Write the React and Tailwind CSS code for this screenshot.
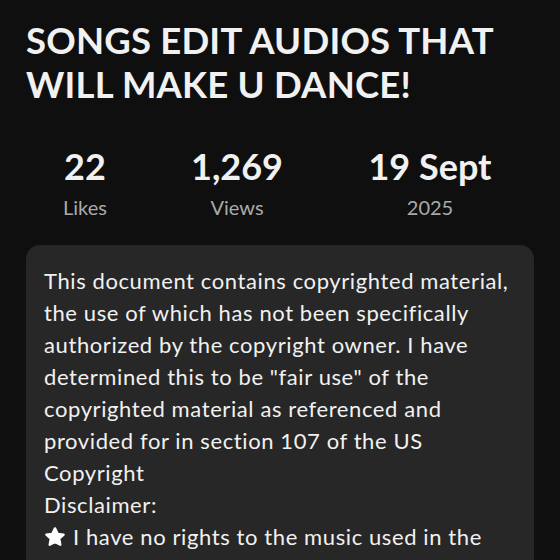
const stats = [
  { value: '22', label: 'Likes' },
  { value: '1,269', label: 'Views' },
  { value: '19 Sept', label: '2025' },
];

const lines = [
  'This document contains copyrighted material,',
  'the use of which has not been specifically',
  'authorized by the copyright owner. I have',
  'determined this to be "fair use" of the',
  'copyrighted material as referenced and',
  'provided for in section 107 of the US',
  'Copyright',
  'Disclaimer:',
];

function Star() {
  return (
    <svg width="22" height="22" viewBox="0 0 24 24" className="inline-block mr-[7px] -mt-[5px] align-middle">
      <path
        d="M12 2.6l2.9 6 6.5.8-4.8 4.5 1.2 6.5L12 17.3l-5.8 3.1 1.2-6.5-4.8-4.5 6.5-.8z"
        fill="#fff"
        stroke="#fff"
        strokeWidth="2.6"
        strokeLinejoin="round"
      />
    </svg>
  );
}

export default function App() {
  return (
    <div className="h-[560px] w-[560px] overflow-hidden bg-[#0f0f0f] font-['Lato',sans-serif] text-[#f1f1f1]">
      {/* Title */}
      <h1 className="pl-[26px] pt-[18px] text-[36.5px] font-bold leading-[44px] tracking-[0.2px]">
        SONGS EDIT AUDIOS THAT
        <br />
        WILL MAKE U DANCE!
      </h1>

      {/* Stats */}
      <div className="ml-[25px] mt-[40px] grid grid-cols-[120px_184px_202px]">
        {stats.map((s) => (
          <div key={s.label} className="flex flex-col items-center">
            <span className="text-[36px] font-bold leading-[40px]">{s.value}</span>
            <span className="mt-[9px] text-[20px] leading-[24px] text-[#aaaaaa]">{s.label}</span>
          </div>
        ))}
      </div>

      {/* Description card */}
      <div className="mx-[26px] mt-[26px] rounded-[14px] bg-[#272727] px-[18px] pt-[20px] pb-6">
        <div className="text-[22px] leading-[32px] tracking-[0.6px] text-[#f1f1f1]">
          {lines.map((l) => (
            <div key={l} className="whitespace-nowrap">{l}</div>
          ))}
          <div className="whitespace-nowrap">
            <Star />I have no rights to the music used in the
          </div>
          <div className="whitespace-nowrap">video.</div>
        </div>
      </div>
    </div>
  );
}
